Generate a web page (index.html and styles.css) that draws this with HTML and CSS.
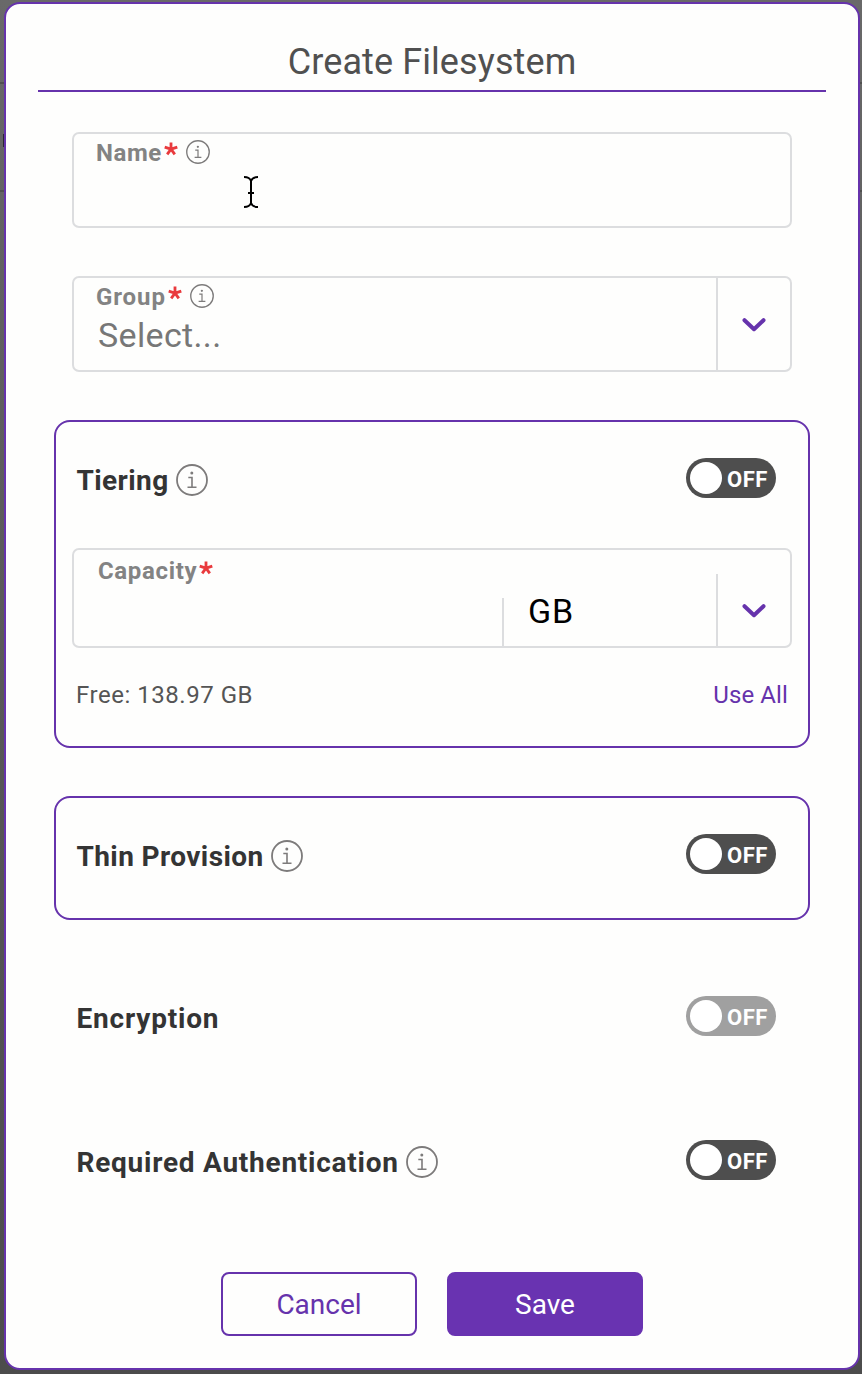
FILE: index.html
```html
<!DOCTYPE html>
<html lang="en">
<head>
<meta charset="utf-8">
<title>Create Filesystem</title>
<link rel="stylesheet" href="styles.css">
</head>
<body>
<svg width="0" height="0" class="defs">
  <symbol id="info" viewBox="0 0 32 32">
    <circle cx="16" cy="16" r="15" fill="none" stroke="currentColor" stroke-width="1.8"/>
    <circle cx="15.8" cy="9" r="1.5" fill="currentColor"/>
    <path d="M12.3 13.500h3.7v9.500M11.500 23.200h9" fill="none" stroke="currentColor" stroke-width="1.6"/>
  </symbol>
  <symbol id="chevron" viewBox="0 0 24 16">
    <path d="M2.5 3.2 12 12.2 21.500 3.200" fill="none" stroke="currentColor" stroke-width="4" stroke-linecap="round" stroke-linejoin="round"/>
  </symbol>
  <symbol id="star" viewBox="0 0 14 14">
    <path d="M7 7.200V.5M7 7.200.7 5.100M7 7.200l6.300-2.100M7 7.200l-3.800 5.200M7 7.200l3.800 5.200" fill="none" stroke="currentColor" stroke-width="2.800"/>
  </symbol>
</svg>
<main class="modal">
  <h1 class="title"><span>Create Filesystem</span></h1>
  <div class="field name">
    <label class="label"><span class="t-name">Name</span><svg class="star"><use href="#star"/></svg><svg class="info small"><use href="#info"/></svg></label>
    <svg class="cursor" viewBox="0 0 16 34"><path d="M1 2c4 0 6 1 7 4 1-3 3-4 7-4M8 6v22M1 32c4 0 6-1 7-4 1 3 3 4 7 4M5 18h6"/></svg>
  </div>
  <div class="field group">
    <div class="main">
      <label class="label"><span class="t-group">Group</span><svg class="star"><use href="#star"/></svg><svg class="info small"><use href="#info"/></svg></label>
      <div class="placeholder">Select...</div>
    </div>
    <div class="drop"><svg class="chevron"><use href="#chevron"/></svg></div>
  </div>
  <section class="card tiering">
    <div class="row"><span class="heading t-tier">Tiering</span><svg class="info"><use href="#info"/></svg><span class="toggle"><i></i><b>OFF</b></span></div>
    <div class="field capacity">
      <label class="label"><span class="t-cap">Capacity</span><svg class="star"><use href="#star"/></svg></label>
      <div class="unit">GB</div>
      <div class="drop"><svg class="chevron"><use href="#chevron"/></svg></div>
    </div>
    <div class="free"><span class="t-free">Free: 138.97 GB</span><a class="t-use">Use All</a></div>
  </section>
  <section class="card thin">
    <div class="row"><span class="heading t-thin">Thin Provision</span><svg class="info"><use href="#info"/></svg><span class="toggle"><i></i><b>OFF</b></span></div>
  </section>
  <div class="row plain encryption"><span class="heading t-enc">Encryption</span><span class="toggle disabled"><i></i><b>OFF</b></span></div>
  <div class="row plain auth"><span class="heading t-auth">Required Authentication</span><svg class="info"><use href="#info"/></svg><span class="toggle"><i></i><b>OFF</b></span></div>
  <div class="actions"><button class="btn cancel">Cancel</button><button class="btn save">Save</button></div>
</main>
</body>
</html>
```

FILE: styles.css
```css
* { box-sizing: border-box; }
body {
  margin: 0;
  width: 862px;
  height: 1374px;
  padding: 2px 2px 4px 4px;
  overflow: hidden;
  font-family: Roboto, "Liberation Sans", sans-serif;
  background:
    linear-gradient(#2b2733, #2b2733) 3px 134px / 1px 13px no-repeat,
    linear-gradient(#505050, #505050) 0 82px / 862px 2px no-repeat,
    linear-gradient(#505050, #505050) 0 190px / 862px 2px no-repeat,
    linear-gradient(#696969, #616161 20%, #555 60%, #4c4c4c);
}
.defs { position: absolute; }
svg { display: block; flex: none; }
.modal {
  width: 856px;
  height: 1368px;
  border: 2px solid #6633ac;
  border-radius: 16px;
  background: #fefefd;
  padding: 0 32px;
}
.title {
  margin: 0;
  height: 88px;
  border-bottom: 2px solid #6633ac;
  padding-top: 34px;
  text-align: center;
  font-size: 36px;
  line-height: 48px;
  font-weight: 400;
  letter-spacing: 0.1px;
  color: #505050;
}
.field {
  width: 720px;
  height: 96px;
  margin: 0 auto;
  border: 2px solid #dcdddf;
  border-radius: 7px;
  display: flex;
}
.name { position: relative; margin-top: 40px; }
.group { margin-top: 48px; }
.label {
  display: flex;
  align-items: center;
  height: 36px;
  padding-left: 22px;
  font-size: 24px;
  font-weight: 700;
  color: #838383;
}
.t-name { letter-spacing: 0.6px; padding-top: 2px; }
.t-group { letter-spacing: 0.9px; padding-top: 2px; }
.t-cap { letter-spacing: 0.65px; }
.star {
  width: 14px;
  height: 14px;
  margin: -6px 8px 0 2px;
  color: #e93a3d;
}
.info { width: 32px; height: 32px; margin-left: 7px; color: #7d7b7b; }
.info.small { width: 24px; height: 24px; margin-left: 0; }
.cursor {
  position: absolute;
  left: 169px;
  top: 41px;
  width: 16px;
  height: 34px;
  fill: none;
  stroke: #000;
  stroke-width: 2;
}
.main { flex: 1; }
.placeholder {
  padding-left: 24px;
  font-size: 34px;
  line-height: 42px;
  letter-spacing: 0.35px;
  color: #777;
}
.drop {
  width: 74px;
  border-left: 2px solid #dcdddf;
  padding-top: 2px;
  display: flex;
  justify-content: center;
  align-items: center;
}
.chevron { width: 24px; height: 16px; color: #6633ac; }
.card {
  margin: 48px 16px 0;
  border: 2px solid #6633ac;
  border-radius: 16px;
}
.tiering { height: 328px; }
.thin { height: 124px; }
.row {
  display: flex;
  align-items: center;
  height: 40px;
  margin: 36px 32px 0 20px;
}
.heading {
  font-size: 28px;
  font-weight: 700;
  color: #343434;
  padding: 4px 0 0 0.5px;
}
.t-tier { letter-spacing: 0.4px; }
.t-thin { letter-spacing: 0.4px; }
.t-enc { letter-spacing: 0.8px; }
.t-auth { letter-spacing: 0.75px; }
.row .info { margin-top: 4px; }
.toggle {
  margin-left: auto;
  width: 90px;
  height: 40px;
  border-radius: 20px;
  background: #4e4e4e;
  display: flex;
  align-items: center;
  padding-left: 4px;
  color: #fff;
}
.toggle i { width: 32px; height: 32px; border-radius: 50%; background: #fff; }
.toggle b { font-size: 22px; line-height: 26px; letter-spacing: 0.5px; padding: 3px 0 0 5px; }
.disabled { background: #a0a0a0; }
.capacity { margin-top: 50px; height: 100px; }
.capacity .label { flex: 1; height: 42px; padding-left: 24px; }
.unit {
  width: 214px;
  height: 48px;
  align-self: flex-end;
  border-left: 2px solid #dcdddf;
  padding-left: 24px;
  font-size: 34px;
  line-height: 26px;
  letter-spacing: 0.8px;
  color: #000;
}
.capacity .drop { height: 72px; align-self: flex-end; }
.free {
  display: flex;
  justify-content: space-between;
  margin: 31px 20px 0;
  font-size: 24px;
  line-height: 32px;
  color: #555;
}
.t-free { letter-spacing: 0.53px; }
.free a { color: #6633ac; letter-spacing: 0.1px; }
.plain { margin: 76px 50px 0 38px; }
.auth { margin-top: 104px; }
.actions {
  display: flex;
  justify-content: center;
  gap: 30px;
  margin-top: 92px;
}
.btn {
  width: 196px;
  height: 64px;
  border: 2px solid #6633ac;
  border-radius: 8px;
  background: #fefefd;
  color: #6633ac;
  font: 400 28px Roboto, sans-serif;
  padding: 0;
}
.save { background: #6933b1; color: #fff; border-color: #6933b1; }
```
